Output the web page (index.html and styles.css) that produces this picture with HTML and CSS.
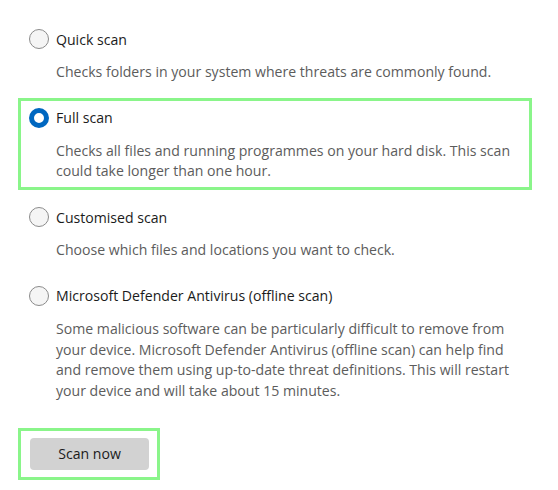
FILE: index.html
```html
<!DOCTYPE html>
<html lang="en">
<head>
<meta charset="utf-8">
<title>Scan options</title>
<link rel="stylesheet" href="styles.css">
</head>
<body>
<div class="page">
  <div class="option">
    <div class="row"><span class="radio"></span><span class="label">Quick scan</span></div>
    <p class="desc">Checks folders in your system where threats are commonly found.</p>
  </div>
  <div class="option highlight">
    <div class="row"><span class="radio checked"></span><span class="label">Full scan</span></div>
    <p class="desc">Checks all files and running programmes on your hard disk. This scan could take longer than one hour.</p>
  </div>
  <div class="option">
    <div class="row"><span class="radio"></span><span class="label">Customised scan</span></div>
    <p class="desc">Choose which files and locations you want to check.</p>
  </div>
  <div class="option">
    <div class="row"><span class="radio"></span><span class="label">Microsoft Defender Antivirus (offline scan)</span></div>
    <p class="desc">Some malicious software can be particularly difficult to remove from your device. Microsoft Defender Antivirus (offline scan) can help find and remove them using up-to-date threat definitions. This will restart your device and will take about 15 minutes.</p>
  </div>
  <div class="action highlight">
    <button class="btn" type="button">Scan now</button>
  </div>
</div>
</body>
</html>
```

FILE: styles.css
```css
html, body {
  margin: 0;
  padding: 0;
  background: #ffffff;
}
.page {
  font-family: "Open Sans", "Noto Sans", sans-serif;
  font-size: 14.1px;
  color: #1b1b1b;
  padding: 19px 0 0 18px;
  width: 514px;
  display: flex;
  flex-direction: column;
  gap: 7px;
}
.option {
  border: 3px solid transparent;
  padding: 7px 8px 5px 8px;
}
.highlight {
  border-color: #8af58a;
}
.row {
  display: flex;
  align-items: center;
  gap: 7px;
  height: 20px;
}
.radio {
  box-sizing: border-box;
  width: 20px;
  height: 20px;
  border-radius: 50%;
  border: 1px solid #8b8b8b;
  background: #f5f5f5;
  flex: none;
}
.radio.checked {
  border: 5.5px solid #0067c0;
  background: #ffffff;
}
.label {
  font-size: 14.1px;
  color: #1b1b1b;
}
.desc {
  margin: 13px 0 0 27px;
  line-height: 20.7px;
  color: #5c5c5c;
}
.action {
  align-self: flex-start;
  margin-top: 11px;
  border: 3px solid #8af58a;
  padding: 7px 8px 7px 9px;
}
.btn {
  display: block;
  width: 119px;
  height: 32px;
  border: none;
  border-radius: 4px;
  background: #d2d2d2;
  font-family: inherit;
  font-size: 14.1px;
  color: #1b1b1b;
  padding: 0;
}
```
